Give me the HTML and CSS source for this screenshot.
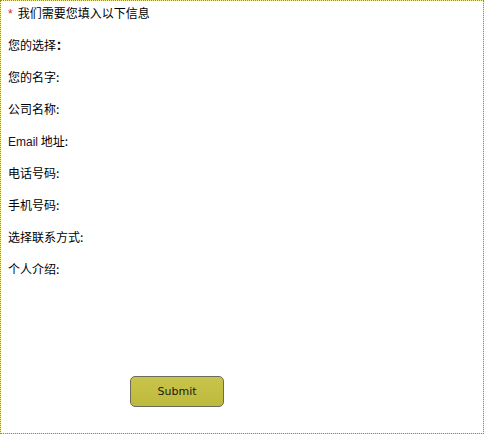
FILE: index.html
```html
<!DOCTYPE html>
<html lang="zh-CN">
<head>
<meta charset="utf-8">
<title>表单</title>
<link rel="stylesheet" href="styles.css">
</head>
<body>
<div class="frame">
  <form class="form">
    <div class="intro"><span class="star">*</span>我们需要您填入以下信息</div>
    <div class="row">您的选择<span class="wide">：</span></div>
    <div class="row">您的名字:</div>
    <div class="row">公司名称:</div>
    <div class="row"><span class="latin">Email</span> 地址:</div>
    <div class="row">电话号码:</div>
    <div class="row">手机号码:</div>
    <div class="row">选择联系方式:</div>
    <div class="row">个人介绍:</div>
    <div class="actions"><button type="button" class="submit">Submit</button></div>
  </form>
</div>
</body>
</html>
```
FILE: styles.css
```css
html, body {
  margin: 0;
  padding: 0;
  background: #ffffff;
}
.frame {
  width: 484px;
  height: 434px;
  background: #f2ee9c;
}
.form {
  box-sizing: border-box;
  width: 484px;
  height: 434px;
  margin: 0;
  border: 1px dotted #8e8e4a;
  background: #ffffff;
  background-clip: padding-box;
  padding: 4px 0 0 7px;
  display: flex;
  flex-direction: column;
  gap: 16px;
  font-family: "Noto Sans CJK SC", "Liberation Sans", sans-serif;
  font-size: 12px;
  line-height: 16px;
  color: #000;
}
.intro,
.row {
  height: 16px;
  overflow: visible;
}
.star {
  color: #e0202a;
  font-family: "Liberation Sans", sans-serif;
  margin-right: 5px;
}
.wide {
  font-weight: bold;
}
.latin {
  font-family: "Liberation Sans", sans-serif;
  color: #2a0a2a;
}
.actions {
  margin-top: 83px;
  padding-left: 122px;
}
.submit {
  width: 94px;
  height: 31px;
  border: 1px solid #6c6a58;
  border-radius: 5px;
  background: linear-gradient(#c9c54c, #bdb93c);
  font-family: "DejaVu Sans", sans-serif;
  font-size: 11px;
  color: #1a1a10;
  padding: 0;
}
```
